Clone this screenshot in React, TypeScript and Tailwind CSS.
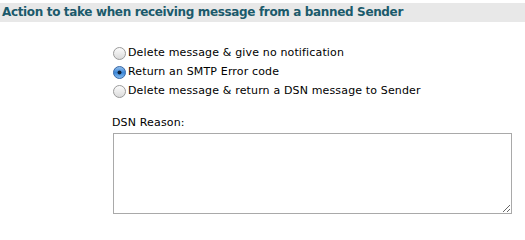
import { useState } from "react";

type Option = { id: string; label: string };

const options: Option[] = [
  { id: "delete", label: "Delete message & give no notification" },
  { id: "smtp", label: "Return an SMTP Error code" },
  { id: "dsn", label: "Delete message & return a DSN message to Sender" },
];

const Radio = ({ checked }: { checked: boolean }) => (
  <svg width="13" height="13" viewBox="0 0 13 13" aria-hidden="true" className="shrink-0">
    <defs>
      <linearGradient id="off" x1="0" y1="0" x2="0" y2="1">
        <stop offset="0" stopColor="#fdfdfd" />
        <stop offset="1" stopColor="#d9d9d9" />
      </linearGradient>
      <linearGradient id="on" x1="0" y1="0" x2="0" y2="1">
        <stop offset="0" stopColor="#9cc4ee" />
        <stop offset="0.5" stopColor="#3a86d8" />
        <stop offset="1" stopColor="#8cc0f0" />
      </linearGradient>
    </defs>
    <circle
      cx="6.5"
      cy="6.5"
      r="6"
      fill={checked ? "url(#on)" : "url(#off)"}
      stroke={checked ? "#3b68a4" : "#9a9a9a"}
      strokeWidth="1"
    />
    {checked && <circle cx="6.5" cy="6.5" r="2" fill="#10223a" />}
  </svg>
);

export default function App() {
  const [action, setAction] = useState("smtp");

  return (
    <div className="h-[229px] w-[525px] bg-white font-['DejaVu_Sans',Verdana,sans-serif] text-[11px] text-black">
      <div className="mt-[3px] h-[19px] bg-[#e8e8e8] pl-[2px] text-[12px] font-bold leading-[19px] tracking-[-0.35px] text-[#1b5a6b]">
        Action to take when receiving message from a banned Sender
      </div>

      <div className="ml-[113px] mt-[22px] flex flex-col tracking-[0.15px]">
        {options.map((opt) => (
          <label
            key={opt.id}
            className="flex h-[19px] cursor-default items-center gap-[2px]"
            onClick={() => setAction(opt.id)}
          >
            <Radio checked={action === opt.id} />
            <span>{opt.label}</span>
          </label>
        ))}
      </div>

      <div className="ml-[112px] mt-[13px] leading-[18px] tracking-[0.15px]">DSN Reason:</div>
      <textarea className="ml-[113px] mt-[1px] block h-[81px] w-[399px] resize border border-[#a9a9a9] bg-white outline-none" />
    </div>
  );
}
